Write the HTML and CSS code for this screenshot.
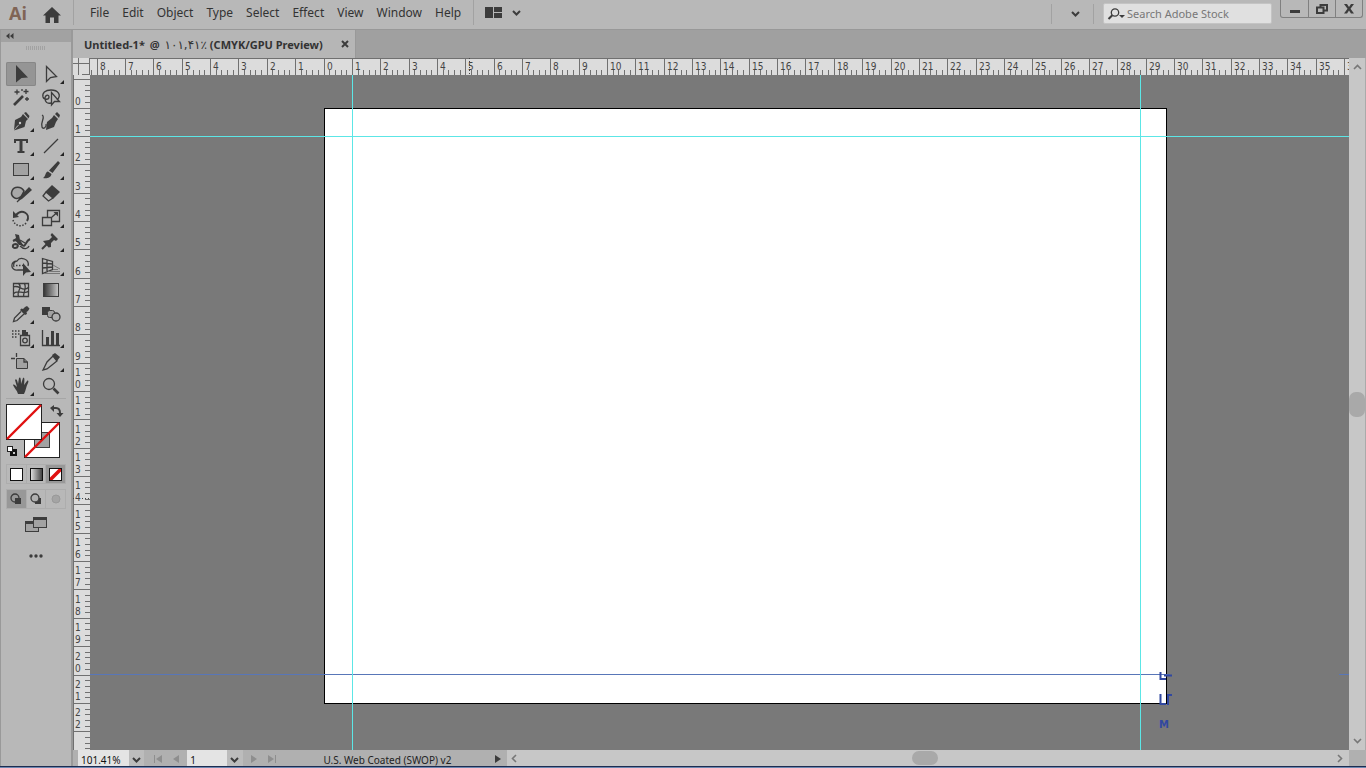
FILE: index.html
```html
<!DOCTYPE html>
<html lang="en">
<head>
<meta charset="utf-8">
<title>Untitled-1 - Illustrator</title>
<link rel="stylesheet" href="styles.css">
</head>
<body>
<div class="app">
  <header class="topbar">
    <span class="logo">Ai</span>
    <button class="home" aria-label="Home"><svg width="20" height="18" viewBox="0 0 20 18"><path d="M10 1L1 9.500H3.500V17H8V11.500H12V17H16.500V9.500H19Z"/></svg></button>
    <nav class="menu">
      <button>File</button><button>Edit</button><button>Object</button><button>Type</button><button>Select</button><button>Effect</button><button>View</button><button>Window</button><button>Help</button>
    </nav>
    <button class="workspace" aria-label="Arrange documents">
      <svg width="18" height="12" viewBox="0 0 18 12"><path d="M0 0H8V11H0ZM9 0H17V5H9ZM9 6H17V11H9Z"/></svg>
      <svg width="9" height="6" viewBox="0 0 9 6"><path class="line2" d="M1 1L4.500 4.500L8 1"/></svg>
    </button>
    <div class="topright">
      <button class="more" aria-label="Switch workspace"><svg width="9" height="6" viewBox="0 0 9 6"><path class="line2" d="M1 1L4.500 4.500L8 1"/></svg></button>
      <div class="search">
        <svg width="19" height="12" viewBox="0 0 19 12"><circle cx="8" cy="4.500" r="3.700" class="line"/><path class="line2" d="M5.300 7.200L1.500 11"/><path d="M12 7H18L15 10Z"/></svg>
        <input type="text" aria-label="Search Adobe Stock" placeholder="Search Adobe Stock">
      </div>
      <div class="winbuttons">
        <button aria-label="Minimize"><svg width="12" height="10" viewBox="0 0 12 10"><path d="M1 6H11V9H1Z"/></svg></button>
        <button aria-label="Restore"><svg width="12" height="10" viewBox="0 0 12 10"><path class="line2" d="M4.500 3V1H11V6.500H8M1 3.500H7.500V9H1Z"/></svg></button>
        <button aria-label="Close"><svg width="12" height="10" viewBox="0 0 12 10"><path d="M1 0H4L6 3L8 0H11L7.500 4.700L11 9.500H8L6 6.500L4 9.500H1L4.500 4.700Z"/></svg></button>
      </div>
    </div>
  </header>

  <div class="main">
    <aside class="toolbar">
      <button class="collapse" aria-label="Collapse panel"><svg width="8" height="6" viewBox="0 0 8 6"><path d="M3.500 0V6L0 3ZM7.500 0V6L4 3Z"/></svg></button>
      <div class="grip"></div>
      <div class="tools">
        <button class="tool active" aria-label="Selection"><svg viewBox="0 0 30 24"><path d="M10 3L22 15.500L15.500 16L10 20.500Z"/></svg></button>
        <button class="tool fly" aria-label="Direct Selection"><svg viewBox="0 0 30 24"><path class="line" d="M10.500 4.500L20.500 14.500L14.500 15.500L10.500 19.500Z"/></svg></button>
        <button class="tool" aria-label="Magic Wand"><svg viewBox="0 0 30 24"><path class="line3" d="M8 19L17 10"/><path class="line" d="M20 3V8M17.500 5.500H22.500M11 3.500V8.500M8.500 6H13.500M21 11V15M19 13H23M16 3V5"/></svg></button>
        <button class="tool" aria-label="Lasso"><svg viewBox="0 0 30 24"><path class="line" d="M21 14C26 9 22 4 15 4C9 4 6 7 7 11C8 14 13 14 13 11C13 8 9 9 9 12C9 16 11 18 15 17"/><path class="line" d="M15.500 6.500V19L18.500 15.500H23.500Z"/></svg></button>
        <button class="tool fly" aria-label="Pen"><svg viewBox="0 0 30 24"><path d="M17 4L22 9L20 11L18.500 17L8 20.500L14 14L11 16L8 20L9 10L15 7ZM18 3L20 2L23.500 6L22.500 8.500Z"/><circle class="hole" cx="14" cy="13" r="1.200"/></svg></button>
        <button class="tool" aria-label="Curvature"><svg viewBox="0 0 30 24"><path class="line" d="M6 5C10 7 4 12 6 17C7 20 11 17 10 14"/><path d="M18 5L22 9L20 12L18 17L10 20L11 12L16 8ZM19 4L21 2L24 5L23 8Z"/></svg></button>
        <button class="tool fly" aria-label="Type"><svg viewBox="0 0 30 24"><path d="M8 5H22V9H20V7H16.500V17H18.500V19H11.500V17H13.500V7H10V9H8Z"/></svg></button>
        <button class="tool fly" aria-label="Line Segment"><svg viewBox="0 0 30 24"><path class="line" d="M8 19L22 5"/></svg></button>
        <button class="tool fly" aria-label="Rectangle"><svg viewBox="0 0 30 24"><rect class="box" x="7.500" y="5.500" width="15" height="12"/></svg></button>
        <button class="tool fly" aria-label="Paintbrush"><svg viewBox="0 0 30 24"><path d="M22 3L24 5L16.500 15L13 12.500ZM12 13.500L15.500 16C15 20 10 21 7 20C10 18 9 14 12 13.500Z"/></svg></button>
        <button class="tool fly" aria-label="Shaper"><svg viewBox="0 0 30 24"><path class="boxline" d="M14 15C10 19 4 14 6 9C8 4 15 4 18 9L15 15"/><path d="M23 5L26 8L16 17L12 19L13.500 15Z"/><path class="line" d="M11 20L14 17"/></svg></button>
        <button class="tool fly" aria-label="Eraser"><svg viewBox="0 0 30 24"><path d="M16 3L24 10L17 17L9 10Z"/><path class="line" d="M10 10L7 14L12.500 19L17 16"/></svg></button>
        <button class="tool fly" aria-label="Rotate"><svg viewBox="0 0 30 24"><path class="line2" d="M10 9C16 2 25 8 21 15"/><path d="M7 5V12L13 11Z"/><path class="dots" d="M20 17C17 21 9 21 7 14"/></svg></button>
        <button class="tool fly" aria-label="Scale"><svg viewBox="0 0 30 24"><path class="line" d="M6.500 11.500H15.500V19.500H6.500ZM11.500 11V4.500H23.500V15.500H16M16 11L21 6.500"/><path d="M17.500 6H22V10.500Z"/></svg></button>
        <button class="tool fly" aria-label="Width"><svg viewBox="0 0 30 24"><path class="line2" d="M7 11C11 9 13 12 16 15C20 18 19 11 24 9"/><path class="line" d="M14 16C18 20 22 19 23 16M14 10L19 13"/><path class="line2" d="M10 14C6 14 6 18 9 18C12 18 13 15 10 14"/><path d="M9 4L13 5L14 10L17 15L13 15L10 11L7 10L10 8Z"/></svg></button>
        <button class="tool fly" aria-label="Free Transform"><svg viewBox="0 0 30 24"><path d="M16 3L22 9L20 11L18 10L15 13L15 17L12.500 17.500L7 11L10 10.500L13 10L16 7L14.500 5Z"/><path class="line2" d="M11 14L6 19"/></svg></button>
        <button class="tool fly" aria-label="Shape Builder"><svg viewBox="0 0 30 24"><path class="line" d="M17 16H12C4 17 4 7 11 7C14 2 24 5 22 12M11 7C8 7 7 11 8 13"/><path class="dots" d="M10 11.500H19"/><path d="M17 9V22L20 18.500L25 18Z"/></svg></button>
        <button class="tool fly" aria-label="Perspective Grid"><svg viewBox="0 0 30 24"><path class="line" d="M6.500 4.500V19.500L16.500 15.500V7.500ZM11 6V17M6.500 9L16.500 10M6.500 14L16.500 13"/><path class="thin" d="M17 15.500H22M12 17.500H24M8 19.500H24M17 11L24 15"/></svg></button>
        <button class="tool" aria-label="Mesh"><svg viewBox="0 0 30 24"><path class="line" d="M7.500 5.500H22.500V18.500H7.500ZM7 9C14 6 16 15 23 9M7 16C13 10 16 18 23 13M12 5C18 10 9 14 13 19M18 5C22 10 16 15 18 19"/></svg></button>
        <button class="tool" aria-label="Gradient"><svg viewBox="0 0 30 24"><defs><linearGradient id="gd"><stop offset="0" stop-color="#333"/><stop offset="1" stop-color="#c8c8c8"/></linearGradient></defs><rect x="7.500" y="5.500" width="15" height="13" fill="url(#gd)" class="edge"/></svg></button>
        <button class="tool fly" aria-label="Eyedropper"><svg viewBox="0 0 30 24"><path d="M19 5L21 4L23.500 6.500L22 9L20.500 10L21 12L19 13L14 8L15.500 6.500L17 7Z"/><path class="line" d="M15 9.500L8.500 16L7.500 19.500L11 18.500L18 12"/></svg></button>
        <button class="tool" aria-label="Blend"><svg viewBox="0 0 30 24"><path d="M6 5H14V13H6Z"/><rect class="box" x="11.500" y="8.500" width="7" height="7" rx="2"/><circle class="ring" cx="20" cy="15" r="4"/></svg></button>
        <button class="tool fly" aria-label="Symbol Sprayer"><svg viewBox="0 0 30 24"><path class="line" d="M14.500 9.500H23.500V19.500H14.500Z"/><path d="M16 4H20V6H22V9H16Z"/><circle class="line" cx="19" cy="14.500" r="2.300"/><path class="dots" d="M6 5H15M6 8H14M6 11H11"/></svg></button>
        <button class="tool fly" aria-label="Column Graph"><svg viewBox="0 0 30 24"><path class="line" d="M6.500 4V19.500H24"/><path d="M10 11H13V19H10ZM15 5H18V19H15ZM20 7H23V19H20Z"/></svg></button>
        <button class="tool" aria-label="Artboard"><svg viewBox="0 0 30 24"><path class="box" d="M10.500 8.500H18L21.500 12V18.500H10.500Z"/><path class="line" d="M10.500 3V7M5 8.500H9M18 8.500V12H21.500"/></svg></button>
        <button class="tool fly" aria-label="Slice"><svg viewBox="0 0 30 24"><path class="line" d="M7 20L11 12L17 6L21 11L16 15L11 19Z"/><path d="M16 5L19 3L24 7L21 11Z"/></svg></button>
        <button class="tool fly" aria-label="Hand"><svg viewBox="0 0 30 24"><path d="M12 20C11 16 8 14 7 11C8 10 9 11 11 13L9 6C10 4.500 11 5 12 10L13 4C14 3 15 3 15 10L17 4C18 3 19 4 18 11L21 7C22 6 23 7 22 9C20 13 20 16 18 20Z"/></svg></button>
        <button class="tool" aria-label="Zoom"><svg viewBox="0 0 30 24"><circle class="line" cx="13" cy="10" r="5.500"/><path class="line3" d="M17.500 14.500L22.500 19.500"/></svg></button>
      </div>
      <div class="swatches">
        <svg width="60" height="56" viewBox="0 0 60 56" role="img" aria-label="Fill and stroke: none">
          <rect class="white" x="18.500" y="18.500" width="35" height="35"/><rect class="box thin" x="28.500" y="28.500" width="15" height="15"/><path class="red" d="M19 53L53 19"/>
          <rect class="white" x="0.500" y="0.500" width="35" height="35"/><path class="red" d="M1 35L35 1"/>
          <path class="line2" d="M48 4H50C53 4 54 6 54 9"/><path d="M44 4L48 1V8ZM50.500 9H57.500L54 13Z"/>
          <path class="black" d="M4 45H11V52H4Z"/><rect class="white" x="1.500" y="42.500" width="5" height="5"/><rect class="hole" x="7" y="48" width="2" height="2"/>
        </svg>
      </div>
      <div class="modes">
        <button aria-label="Color"><span class="chip"></span></button><button aria-label="Gradient fill"><span class="chip grad"></span></button><button class="active" aria-label="None"><svg class="chip" viewBox="0 0 11 11"><path class="redwide" d="M0 11L11 0"/></svg></button>
      </div>
      <div class="modes draw">
        <button class="active" aria-label="Draw normal"><svg width="14" height="12" viewBox="0 0 14 12"><circle class="line" cx="6" cy="5" r="4"/><path d="M6 5H12V11H6Z"/></svg></button><button aria-label="Draw behind"><svg width="14" height="12" viewBox="0 0 14 12"><path d="M6 5H12V11H6Z"/><circle class="ring" cx="6" cy="5" r="4"/></svg></button><button disabled aria-label="Draw inside"><svg width="14" height="12" viewBox="0 0 14 12"><circle class="dim" cx="7" cy="6" r="4"/></svg></button>
      </div>
      <button class="screenmode" aria-label="Change screen mode"><svg width="24" height="18" viewBox="0 0 24 18"><rect class="box" x="1.500" y="5.500" width="13" height="10"/><path d="M1 5H15V8H1Z"/><rect class="box" x="9.500" y="1.500" width="13" height="10"/><path d="M9 1H23V4H9Z"/></svg></button>
      <button class="dotsmenu" aria-label="Edit toolbar"><svg width="14" height="4" viewBox="0 0 14 4"><circle cx="2" cy="2" r="1.700"/><circle cx="7" cy="2" r="1.700"/><circle cx="12" cy="2" r="1.700"/></svg></button>
    </aside>

    <main class="document">
      <div class="tabs">
        <div class="tab"><span>Untitled-1* <i class="at">@</i> <bdi class="pct">۱۰۱,۴۱٪</bdi> (CMYK/GPU Preview)</span><button aria-label="Close document"><svg width="8" height="8" viewBox="0 0 8 8"><path class="line2" d="M1 1L7 7M7 1L1 7"/></svg></button></div>
      </div>
      <div class="workarea">
        <svg class="origin" viewBox="0 0 17 17"><path d="M0 5.500H17M5.500 0V17M16.500 0V17M9 16.500H17"/></svg>
        <svg class="ruler top" id="ruler-x"></svg>
        <div class="vscroll">
          <svg width="9" height="17" viewBox="0 0 9 17"><path class="chev" d="M1 11L4.500 7.500L8 11"/></svg>
          <span class="thumb"></span>
          <svg width="9" height="17" viewBox="0 0 9 17"><path class="chev" d="M1 6L4.500 9.500L8 6"/></svg>
        </div>
        <svg class="ruler left" id="ruler-y"></svg>
        <div class="canvas">
          <div class="artboard"></div>
          <div class="guide h g1"></div>
          <div class="guide h sel"></div>
          <div class="guide h sel tail"></div>
          <div class="guide v g2"></div>
          <div class="guide v g3"></div>
          <div class="marks">
            <svg width="14" height="36" viewBox="0 0 14 36"><path d="M1.500 1V8H7M5 4.500H13M1.500 23V33H7M9 34V24H13"/></svg>
            <span>M</span>
          </div>
        </div>
      </div>
      <footer class="status">
        <div class="statusleft">
          <input class="zoom" aria-label="Zoom level" value="101.41%">
          <button class="drop" aria-label="Zoom presets"><svg width="9" height="6" viewBox="0 0 9 6"><path class="line2" d="M1 1L4.500 4.500L8 1"/></svg></button>
          <div class="pager"><button disabled aria-label="First artboard"><svg width="10" height="8" viewBox="0 0 10 8"><path d="M1 0H2V8H1ZM9 0V8L3 4Z"/></svg></button><button disabled aria-label="Previous artboard"><svg width="6" height="8" viewBox="0 0 6 8"><path d="M6 0V8L0 4Z"/></svg></button></div>
          <input class="page" aria-label="Artboard" value="1">
          <button class="drop" aria-label="Artboard list"><svg width="9" height="6" viewBox="0 0 9 6"><path class="line2" d="M1 1L4.500 4.500L8 1"/></svg></button>
          <div class="pager"><button disabled aria-label="Next artboard"><svg width="6" height="8" viewBox="0 0 6 8"><path d="M0 0V8L6 4Z"/></svg></button><button disabled aria-label="Last artboard"><svg width="10" height="8" viewBox="0 0 10 8"><path d="M8 0H9V8H8ZM1 0V8L7 4Z"/></svg></button></div>
          <span class="profile">U.S. Web Coated (SWOP) v2</span>
          <button class="play" aria-label="Status display"><svg width="6" height="8" viewBox="0 0 6 8"><path d="M0 0V8L6 4Z"/></svg></button>
        </div>
        <div class="hscroll">
          <svg width="17" height="9" viewBox="0 0 17 9"><path class="chev" d="M9 1L5.500 4.500L9 8"/></svg>
          <span class="thumb"></span>
          <svg width="17" height="9" viewBox="0 0 17 9"><path class="chev" d="M6 1L9.500 4.500L6 8"/></svg>
        </div>
        <div class="corner"></div>
      </footer>
    </main>
  </div>
  <div class="taskedge"></div>
</div>
<script src="script.js"></script>
</body>
</html>
```
FILE: styles.css
```css
* { box-sizing: border-box; }
body {
  margin: 0;
  font-family: "Noto Sans", "Open Sans", sans-serif;
  font-size: 12px;
  color: #333;
  background: #b8b8b8;
}
button { margin: 0; padding: 0; border: 0; background: none; font: inherit; color: inherit; display: flex; align-items: center; justify-content: center; }
input { border: 0; padding: 0; margin: 0; min-width: 0; font: inherit; color: #111; outline: 0; }
svg { display: block; fill: #3c3c3c; }
svg .line, svg .line2, svg .line3, svg .thin, svg .dots, svg .chev { fill: none; stroke: #3c3c3c; stroke-width: 1.3; }
svg .line2 { stroke-width: 2; }
svg .line3 { stroke-width: 2.6; }
svg .thin { stroke: #777; stroke-width: 1; }
svg .dots { stroke-dasharray: 1.5 1.5; stroke-width: 1.5; }
svg .chev { stroke: #777; stroke-width: 1.6; }
svg .hole { fill: #c8c8c8; }
svg .black { fill: #111; }
svg .box { fill: #a2a2a2; stroke: #3c3c3c; stroke-width: 1; }
svg .boxline { fill: #a8a8a8; stroke: #3c3c3c; stroke-width: 1.5; }
svg .ring { fill: #b0b0b0; stroke: #3c3c3c; stroke-width: 1.3; }
svg .dim { fill: #a4a4a4; stroke: #999; }
svg .edge { stroke: #3c3c3c; }
svg .white { fill: #fff; stroke: #222; }
svg .red { fill: none; stroke: #e01010; stroke-width: 2.4; }
svg .redwide { fill: none; stroke: #e01010; stroke-width: 3.5; }

.app { height: 100vh; display: flex; flex-direction: column; overflow: hidden; }

.topbar { flex: none; height: 30px; display: flex; align-items: flex-start; background: #b8b8b8; border-bottom: 1px solid #989898; }
.logo { width: 38px; padding-left: 9px; font: bold 18px/26px "Open Sans", sans-serif; color: #806455; }
.home { width: 35px; height: 29px; padding-right: 7px; }
.menu { display: flex; gap: 13px; height: 25px; padding: 0 12px 0 16px; border: solid #a2a2a2; border-width: 0 1px; }
.workspace { gap: 9px; height: 25px; margin-left: 11px; }
.topright { margin-left: auto; display: flex; padding-right: 3px; }
.more { width: 43px; height: 20px; margin: 4px 9px 0 0; padding-left: 5px; border: solid #a2a2a2; border-width: 0 1px; }
.search { width: 169px; height: 21px; margin: 3px 8px 0 0; display: flex; align-items: center; gap: 1px; padding-left: 3px; background: #e0e0e0; border: 1px solid #c4c4c4; border-radius: 2px; }
.search input { flex: 1; background: none; font-size: 11px; }
.search input::placeholder { color: #777; opacity: 1; }
.winbuttons { display: flex; height: 18px; border: 1px solid #808080; border-top: 0; border-radius: 0 0 3px 3px; }
.winbuttons button { width: 27px; height: 17px; border-left: 1px solid #808080; }
.winbuttons button:first-child { border-left: 0; }

.main { flex: 1; min-height: 0; display: flex; }
.toolbar { flex: none; width: 73px; border: solid #999; border-width: 0 2px 0 1px; background: #b8b8b8; }
.collapse { width: 100%; height: 12px; justify-content: flex-start; padding-left: 5px; background: #a2a2a2; }
.grip { width: 20px; height: 4px; margin: 4px auto 12px; background: repeating-linear-gradient(90deg, #a2a2a2 0 1px, #b8b8b8 1px 2px); }
.tools { display: grid; grid-template-columns: 30px 30px; grid-auto-rows: 24px; padding: 0 5px; }
.tool { position: relative; }
.tool svg { width: 30px; height: 24px; }
.tool.active { background: #959595; border-radius: 2px; box-shadow: inset 0 0 0 1px #878787; }
.tool.fly::after { content: ""; position: absolute; right: 2px; bottom: 2px; border: solid transparent; border-width: 2px; border-right-color: #222; border-bottom-color: #222; }
.swatches { margin: 0 5px; padding-top: 5px; border-top: 1px solid #a6a6a6; }
.modes { display: flex; width: 60px; height: 20px; margin: 4px 5px 5px; border: 1px solid #adadad; }
.modes button { flex: 1; border-right: 1px solid #adadad; }
.modes button:last-child { border-right: 0; }
.modes .active { background: #989898; }
.chip { width: 13px; height: 13px; background: #fff; border: 1px solid #111; }
.grad { background: linear-gradient(90deg, #ddd, #444); }
.draw { margin-bottom: 6px; }
.screenmode, .dotsmenu { width: 100%; height: 20px; }
.dotsmenu { margin-top: 11px; }

.document { flex: 1; min-width: 0; display: flex; flex-direction: column; }
.tabs { flex: none; height: 28px; display: flex; background: #a0a0a0; }
.tab { width: 283px; display: flex; align-items: center; justify-content: space-between; padding: 0 6px 0 11px; background: #b6b6b6; border-right: 1px solid #999; font-weight: bold; font-size: 11px; white-space: nowrap; }
.at { font-style: normal; margin: 0 2px; }
.pct { font-family: "DejaVu Sans", sans-serif; font-size: 12px; font-weight: normal; }
.workarea { flex: 1; min-height: 0; display: grid; grid-template: 17px 1fr / 17px 1fr 17px; }
.origin, .ruler { background: #dcdcdc; width: 100%; height: 100%; min-height: 0; overflow: hidden; }
.origin path, .ruler path { fill: none; stroke: #707070; }
.ruler .cursor { stroke-dasharray: 1 2; stroke: #444; }
.ruler text { font: 10px "DejaVu Sans Condensed", "DejaVu Sans", sans-serif; fill: #444; }
.vscroll { grid-column: 3; grid-row: 1 / 3; display: flex; flex-direction: column; align-items: center; justify-content: space-between; background: #c7c7c7; border-right: 1px solid #aaa; }
.thumb { background: #a9a9a9; border-radius: 7px; }
.vscroll .thumb { width: 16px; height: 25px; }
.ruler.left { grid-row: 2; grid-column: 1; }
.canvas { grid-row: 2; grid-column: 2; position: relative; overflow: hidden; background: #797979; }
.artboard { position: absolute; left: 234px; top: 33px; width: 843px; height: 596px; background: #fff; border: 1px solid #000; }
.guide { position: absolute; background: #5ce6e6; }
.guide.h { left: 0; right: 0; height: 1px; }
.guide.v { top: 0; bottom: 0; width: 1px; }
.g1 { top: 61px; }
.g2 { left: 262px; }
.g3 { left: 1050px; }
.guide.sel { top: 599px; right: auto; width: 1080px; background: #5876b8; }
.guide.tail { left: auto; right: 0; width: 10px; }
.marks { position: absolute; left: 1069px; top: 596px; color: #3148a0; font: bold 10px/12px "DejaVu Sans", sans-serif; }
.marks svg path { fill: none; stroke: #3148a0; stroke-width: 2; }
.marks span { display: block; margin-top: 12px; }

.status { flex: none; height: 16px; display: flex; background: #b0b0b0; }
.statusleft { flex: none; display: flex; width: 434px; padding-left: 5px; font-size: 10px; color: #222; overflow: hidden; }
.statusleft input { height: 16px; padding: 3px 0 0 3px; background: #e4e4e4; }
.zoom { width: 51px; }
.page { width: 40px; }
.drop { width: 16px; padding-top: 3px; background: #bcbcbc; }
.pager { display: flex; align-items: center; justify-content: center; gap: 10px; width: 43px; padding-top: 2px; }
.pager svg { fill: #8e8e8e; }
.profile { width: 211px; padding: 3px 0 0 38px; line-height: 14px; white-space: nowrap; }
.play { margin-left: auto; margin-right: 6px; padding-top: 2px; }
.hscroll { flex: 1; display: flex; align-items: center; justify-content: space-between; background: #c7c7c7; }
.hscroll .thumb { width: 26px; height: 14px; margin-right: 6px; }
.corner { width: 17px; background: #b0b0b0; }
.taskedge { flex: none; height: 2px; background: #6d87b0; border-top: 1px solid #1c2c50; }
```
FILE: script.js
```js
const UNIT = 28.35;
const NS = "http://www.w3.org/2000/svg";

function add(svg, name, attrs, text) {
  const el = document.createElementNS(NS, name);
  for (const key in attrs) el.setAttribute(key, attrs[key]);
  if (text !== undefined) el.textContent = text;
  svg.appendChild(el);
}

// zero: offset of the ruler origin from the start of the strip
function drawRuler(svg, zero, vertical, cursor) {
  const length = vertical ? svg.clientHeight : svg.clientWidth;
  const first = Math.floor(-zero / UNIT);
  let d = vertical ? "M.5 0V" + length : "M0 .5H" + length;
  for (let n = first; zero + n * UNIT < length; n++) {
    for (let k = 0; k < 5; k++) {
      const p = Math.floor(zero + (n + k / 5) * UNIT) + 0.5;
      const from = k ? 12 : 0;
      d += vertical ? `M${from} ${p}H17` : `M${p} ${from}V17`;
    }
    const at = Math.floor(zero + n * UNIT);
    const label = String(Math.abs(n));
    if (!vertical && at >= 0) {
      add(svg, "text", { x: at + 3, y: 12 }, label);
    } else if (vertical && n >= 0) {
      [...label].reverse().forEach((digit, i) => {
        add(svg, "text", { x: 2, y: at - 3 - i * 12 }, digit);
      });
    }
  }
  add(svg, "path", { d });
  const c = cursor + 0.5;
  add(svg, "path", { class: "cursor", d: vertical ? `M0 ${c}H17` : `M${c} 0V17` });
}

function drawAll() {
  const x = document.getElementById("ruler-x");
  const y = document.getElementById("ruler-y");
  x.replaceChildren();
  y.replaceChildren();
  drawRuler(x, 234, false, 379);
  drawRuler(y, 33, true, 423);
}

drawAll();
window.addEventListener("resize", drawAll);
```
